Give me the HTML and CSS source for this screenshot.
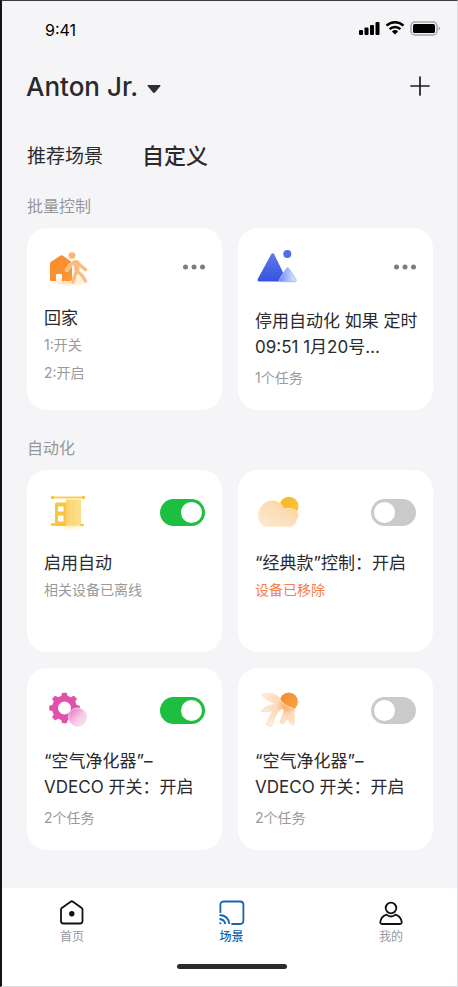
FILE: index.html
```html
<!DOCTYPE html>
<html lang="zh-CN">
<head>
<meta charset="utf-8">
<meta name="viewport" content="width=device-width, initial-scale=1">
<title>场景</title>
<link rel="stylesheet" href="styles.css">
</head>
<body>
<div class="screen">
  <div class="status">
    <span class="status-time">9:41</span>
    <svg class="status-icons" width="84" height="16" viewBox="0 0 84 16" aria-hidden="true">
      <rect x="1" y="10" width="4" height="5" rx="1"/>
      <rect x="6.500" y="7.500" width="4" height="7.500" rx="1"/>
      <rect x="12" y="5" width="4" height="10" rx="1"/>
      <rect x="17.500" y="2" width="4" height="13" rx="1"/>
      <g fill="none" stroke="#000" stroke-width="2.500">
        <path d="M28.500 5.700a12.200 12.200 0 0 1 17 0"/>
        <path d="M31.600 9.100a7.800 7.800 0 0 1 10.800 0"/>
      </g>
      <path d="M33.900 11.400a4.600 4.600 0 0 1 6.200 0L37 14.600z"/>
      <rect x="53" y="2" width="26" height="13" rx="4" fill="none" stroke="#a4a4a6" stroke-width="1.500"/>
      <rect x="55" y="4" width="22" height="9" rx="1.500"/>
      <path d="M80.500 6.500c2 .8 2 3.200 0 4z" fill="#a4a4a6"/>
    </svg>
  </div>

  <header class="header">
    <button class="home-picker" type="button">
      <span>Anton Jr.</span>
      <svg width="14" height="10" viewBox="0 0 14 10" aria-hidden="true"><path d="M1.200 1h11.600q1.400 0 .4 1.300L8.200 8.300q-1.200 1.300-2.400 0L.8 2.300Q-.2 1 1.200 1z" fill="#2e2e33"/></svg>
    </button>
    <button class="icon-button" type="button" aria-label="添加">
      <svg width="20" height="20" viewBox="0 0 20 20" aria-hidden="true"><path d="M10 1v18M1 10h18" stroke="#1c1c1e" stroke-width="1.700" fill="none" stroke-linecap="round"/></svg>
    </button>
  </header>

  <nav class="tabs">
    <a class="tab" href="#recommended">推荐场景</a>
    <a class="tab tab-active" href="#custom">自定义</a>
  </nav>

  <main class="content" id="custom">
    <section class="group">
      <h2 class="group-title">批量控制</h2>
      <div class="grid">
        <article class="card card-list">
          <div class="card-head">
            <svg class="card-icon" width="48" height="48" viewBox="0 0 48 48" aria-hidden="true">
              <defs>
                <linearGradient id="house" x1="0" y1="0" x2="1" y2="1"><stop offset="0" stop-color="#f98a2c"/><stop offset="1" stop-color="#fb9834"/></linearGradient>
                <radialGradient id="houseGlow"><stop offset="0" stop-color="#fdd9ae"/><stop offset="1" stop-color="#fdd9ae" stop-opacity="0"/></radialGradient>
              </defs>
              <ellipse cx="25" cy="35" rx="20" ry="6" fill="url(#houseGlow)"/>
              <path d="M6 17.500q0-1 .8-1.500L16.500 9.600q1.200-.8 2.400 0l8.300 6.200q.8.600.8 1.600V34q0 1-1 1h-9v-6q0-1-1-1h-4q-1 0-1 1v6H7q-1 0-1-1z" fill="url(#house)"/>
              <g stroke-linecap="round" stroke-linejoin="round" fill="none">
                <g stroke="#fde0c0" stroke-width="4"><path d="M30.500 16l-4.500 3.500-3 4.500M33 16l4 4 4.500 3.500M31 17l1.500 8-3.500 11M33.500 17l-.5 8 5 4.500 3.500 5.500"/></g>
                <g stroke="#f9bb83" stroke-width="3"><path d="M30.500 16l-4.500 3.500-3 4.500M33 16l4 4 4.500 3.500M31 17l1.500 8-3.500 11M33.500 17l-.5 8 5 4.500 3.500 5.500"/></g>
              </g>
              <path d="M29.500 14.500h5l1 10h-4.500z" fill="#f9bb83"/>
              <circle cx="28" cy="9.500" r="3.500" fill="#f9b475" stroke="#fde0c2" stroke-width=".6"/>
            </svg>
            <button class="more" type="button" aria-label="更多">
              <svg width="24" height="6" viewBox="0 0 24 6" fill="#7d7d80" aria-hidden="true"><circle cx="4.500" cy="3" r="2.500"/><circle cx="13" cy="3" r="2.500"/><circle cx="21.500" cy="3" r="2.500"/></svg>
            </button>
          </div>
          <h3 class="card-title">回家</h3>
          <p class="card-note">1:开关</p>
          <p class="card-note">2:开启</p>
        </article>

        <article class="card card-long">
          <div class="card-head">
            <svg class="card-icon" width="48" height="48" viewBox="0 0 48 48" aria-hidden="true">
              <defs>
                <linearGradient id="peak" x1="0" y1="0" x2="0" y2="1"><stop offset="0" stop-color="#6179ea"/><stop offset="1" stop-color="#3453e0"/></linearGradient>
                <linearGradient id="smallPeak" x1="0" y1="0" x2="1" y2="0"><stop offset="0" stop-color="#6d86ee"/><stop offset="1" stop-color="#e4eaff"/></linearGradient>
              </defs>
              <path d="M16.200 8.200q1.500-2 3 0L31 32.500q1.200 3-1.500 3h-25q-3 0-1.500-3z" fill="url(#peak)"/>
              <circle cx="32.300" cy="8" r="4" fill="#526dea"/>
              <path d="M31.400 22.500q1.300-1.800 2.600 0l7 11q1 2.200-1.200 2.200H25.600q-2.200 0-1.200-2.200z" fill="url(#smallPeak)" stroke="#aab9f7" stroke-width="1"/>
            </svg>
            <button class="more" type="button" aria-label="更多">
              <svg width="24" height="6" viewBox="0 0 24 6" fill="#7d7d80" aria-hidden="true"><circle cx="4.500" cy="3" r="2.500"/><circle cx="13" cy="3" r="2.500"/><circle cx="21.500" cy="3" r="2.500"/></svg>
            </button>
          </div>
          <h3 class="card-title">停用自动化 如果 定时 09:51 1月20号…</h3>
          <p class="card-note">1个任务</p>
        </article>
      </div>
    </section>

    <section class="group">
      <h2 class="group-title">自动化</h2>
      <div class="grid">
        <article class="card">
          <div class="card-head">
            <svg class="card-icon" width="48" height="48" viewBox="0 0 48 48" aria-hidden="true">
              <defs>
                <radialGradient id="curtainGlow"><stop offset="0" stop-color="#fde3a0"/><stop offset="1" stop-color="#fff" stop-opacity="0"/></radialGradient>
                <linearGradient id="curtain" x1="0" y1="0" x2="1" y2="0"><stop offset="0" stop-color="#fbd368"/><stop offset="1" stop-color="#fadf8a"/></linearGradient>
              </defs>
              <ellipse cx="27" cy="37" rx="18" ry="8" fill="url(#curtainGlow)"/>
              <path d="M8 9.500h32" stroke="#f8cf55" stroke-width="2"/>
              <circle cx="8.500" cy="9.500" r="1.700" fill="#f6c43b"/><circle cx="39.500" cy="9.500" r="1.700" fill="#f6c43b"/>
              <path d="M8 36.500h6" stroke="#f6bf30" stroke-width="2.400" stroke-linecap="round"/>
              <path fill-rule="evenodd" d="M11 16q0-1.500 1.500-1.500H22V38H11zM14 18.500v5h5.500v-5zM14 27.500v6h5.500v-6z" fill="#f9c540"/>
              <path d="M22 11.500h15v26H22z" fill="url(#curtain)"/>
              <path d="M27 11.500v26M32 11.500v26" stroke="#fbe08c" stroke-width="1"/>
              <path d="M37 37h2" stroke="#f6c43b" stroke-width="2" stroke-linecap="round"/>
            </svg>
            <input class="switch" type="checkbox" role="switch" aria-label="启用自动" checked>
          </div>
          <h3 class="card-title">启用自动</h3>
          <p class="card-note">相关设备已离线</p>
        </article>

        <article class="card">
          <div class="card-head">
            <svg class="card-icon" width="48" height="48" viewBox="0 0 48 48" aria-hidden="true">
              <defs>
                <linearGradient id="sun" x1="0" y1="0" x2="1" y2="1"><stop offset="0" stop-color="#f7b520"/><stop offset="1" stop-color="#fcc84e"/></linearGradient>
                <linearGradient id="cloud" x1="1" y1="0" x2="0" y2="1"><stop offset="0" stop-color="#fbcf78"/><stop offset=".4" stop-color="#fbdcb4"/><stop offset="1" stop-color="#fde9d2"/></linearGradient>
              </defs>
              <circle cx="34" cy="18.300" r="9.500" fill="url(#sun)"/>
              <path d="M12.500 38.500C7 38.500 3.500 34 3.500 27.500c0-5 1.500-8.500 5-11.500 2.500-2.500 5.500-3.500 9-3.500 6 0 9.800 3.500 11 9 1.500-.8 3-1 5-1 6 0 9.800 3 9.800 7.500 0 2-.8 3-2 4 0 4-3.300 6.500-7.800 6.500z" fill="url(#cloud)" stroke="#fdebcf" stroke-width=".8"/>
            </svg>
            <input class="switch" type="checkbox" role="switch" aria-label="“经典款”控制：开启">
          </div>
          <h3 class="card-title">“经典款”控制：开启</h3>
          <p class="card-note card-alert">设备已移除</p>
        </article>

        <article class="card card-long">
          <div class="card-head">
            <svg class="card-icon" width="48" height="48" viewBox="0 0 48 48" aria-hidden="true">
              <defs>
                <linearGradient id="bubble" x1="0" y1="0" x2="1" y2="1"><stop offset="0" stop-color="#e668b8"/><stop offset=".55" stop-color="#f6c8e5"/><stop offset="1" stop-color="#fbe9f5"/></linearGradient>
              </defs>
              <circle cx="20.500" cy="22" r="9.500" fill="none" stroke="#e150ab" stroke-width="6"/>
              <g fill="#e150ab">
                <path id="tooth" d="M17.200 11l.7-3.500q.2-.8 1-.8h3.200q.8 0 1 .8l.7 3.500z"/>
                <use href="#tooth" transform="rotate(45 20.500 22)"/>
                <use href="#tooth" transform="rotate(90 20.500 22)"/>
                <use href="#tooth" transform="rotate(135 20.500 22)"/>
                <use href="#tooth" transform="rotate(180 20.500 22)"/>
                <use href="#tooth" transform="rotate(225 20.500 22)"/>
                <use href="#tooth" transform="rotate(270 20.500 22)"/>
                <use href="#tooth" transform="rotate(315 20.500 22)"/>
              </g>
              <circle cx="33.500" cy="31" r="9" fill="url(#bubble)" stroke="#f7d3ea" stroke-width="1"/>
            </svg>
            <input class="switch" type="checkbox" role="switch" aria-label="“空气净化器”– VDECO 开关：开启" checked>
          </div>
          <h3 class="card-title">“空气净化器”– VDECO 开关：开启</h3>
          <p class="card-note">2个任务</p>
        </article>

        <article class="card card-long">
          <div class="card-head">
            <svg class="card-icon" width="48" height="48" viewBox="0 0 48 48" aria-hidden="true">
              <defs>
                <linearGradient id="core" x1="0" y1="0" x2="1" y2="1"><stop offset="0" stop-color="#f58a2c"/><stop offset="1" stop-color="#fba649"/></linearGradient>
                <radialGradient id="petal" gradientUnits="userSpaceOnUse" cx="31" cy="20" r="24"><stop offset="0" stop-color="#f9a95c"/><stop offset=".4" stop-color="#fcd9ba"/><stop offset="1" stop-color="#fdebd8"/></radialGradient>
              </defs>
              <circle cx="33.800" cy="15.800" r="9.200" fill="url(#core)"/>
              <g fill="url(#petal)" stroke="#fbd3ae" stroke-width=".5" stroke-linejoin="round">
                <path d="M26 19C20 18 13 15.500 7.500 10q-.8-1.500 1-2C15 7 21 7.500 25 12z"/>
                <path d="M27 19c-6-1.500-10-.5-14 1-3.500 1.300-5.500 3-7 4.500q-.5 1.200 1 1.200c6 0 12 .3 18-3.700z"/>
                <path d="M26 20c-5 2-9 5-11 9-1.500 3.500-3 7-4 9.500q1.500 2.500 6 1.500c1.500-4 2.500-8 4.500-11.500 1.500-2.500 4-5 6.500-6.500z"/>
                <path d="M28.500 24c0 5-3 8-3.500 12.500q1 1.800 3.500 1l4-4.500c.5-3 .5-6 0-9z"/>
                <path d="M31 24c0 5 2 11 5.500 14.500q2 1.200 2.500-.5c1-5 .8-10-1-13.500z"/>
                <path d="M24.500 12c2 4 5 6.500 14.500 10.500 1 1 1 3.500 0 5-6-1-11-3-14.500-7-1.500-3-1.500-6 0-8.500z" stroke="none"/>
              </g>
              <path d="M24.500 12c2 5 6 8 13.500 10.500" fill="none" stroke="#fde2c6" stroke-width=".8"/>
            </svg>
            <input class="switch" type="checkbox" role="switch" aria-label="“空气净化器”– VDECO 开关：开启">
          </div>
          <h3 class="card-title">“空气净化器”– VDECO 开关：开启</h3>
          <p class="card-note">2个任务</p>
        </article>
      </div>
    </section>
  </main>

  <footer class="footer">
    <nav class="tabbar">
      <a class="tabbar-item" href="#home">
        <svg width="28" height="28" viewBox="0 0 28 28" aria-hidden="true"><path d="M3 10.500q0-1 .8-1.600L12.600 2.700q1.200-.9 2.400 0l8.700 6.200q.8.600.8 1.600V22q0 2.500-2.500 2.500H5.500Q3 24.500 3 22z" fill="none" stroke="#111" stroke-width="1.800"/><circle cx="13.800" cy="14.700" r="2.700" fill="#111"/></svg>
        <span>首页</span>
      </a>
      <a class="tabbar-item tabbar-active" href="#scenes">
        <svg width="28" height="28" viewBox="0 0 28 28" fill="none" stroke="#1464b4" stroke-width="1.800" aria-hidden="true"><path d="M2.400 14V6q0-3.500 3.500-3.500h16q3.500 0 3.500 3.500v15.500q0 3.500-3.500 3.500h-8.500"/><path d="M1.500 16q9 .5 9.800 9M1.500 20q5 .6 5.800 5"/><circle cx="2.300" cy="24.200" r="1" fill="#1464b4" stroke="none"/></svg>
        <span>场景</span>
      </a>
      <a class="tabbar-item" href="#me">
        <svg width="28" height="28" viewBox="0 0 28 28" fill="none" stroke="#111" stroke-width="1.800" stroke-linejoin="round" aria-hidden="true"><circle cx="14" cy="9" r="5.300"/><path d="M9.500 15.700Q11.500 17.500 14 17.500t4.500-1.800q5.500 2 6.200 7.300.2 2-1.700 2H5q-1.900 0-1.700-2 .7-5.300 6.200-7.300z"/></svg>
        <span>我的</span>
      </a>
    </nav>
    <div class="home-bar"></div>
  </footer>
</div>
</body>
</html>
```

FILE: styles.css
```css
* {
  box-sizing: border-box;
}

body {
  margin: 0;
  background: #f5f5f8;
  color: #2a2a2c;
  font-family: "Liberation Sans", "Noto Sans CJK SC", sans-serif;
}

h2,
h3,
p {
  margin: 0;
  font-weight: 400;
}

a {
  color: inherit;
  text-decoration: none;
}

button {
  padding: 0;
  border: 0;
  background: none;
  color: inherit;
  font: inherit;
}

svg {
  display: block;
  flex: none;
}

.screen {
  display: flex;
  flex-direction: column;
  min-height: 100vh;
  border: 1px solid #dcdce0;
  border-top-color: #3c3a42;
  border-left: 2px solid #141416;
}

/* Status bar */
.status {
  display: flex;
  align-items: center;
  justify-content: space-between;
  height: 56px;
  padding: 0 15px 0 43px;
}

.status-time {
  padding-top: 2px;
  color: #000;
  font-family: Inter, sans-serif;
  font-size: 16px;
}

.status-icons {
  margin-bottom: 2px;
}

/* Header */
.header {
  display: flex;
  align-items: center;
  justify-content: space-between;
  height: 58px;
  padding: 0 27px 0 24px;
}

.home-picker {
  display: flex;
  align-items: center;
  gap: 9px;
  font-family: Inter, sans-serif;
  font-size: 26px;
  font-weight: 500;
}

.home-picker svg {
  margin-top: 5px;
}

/* Tabs */
.tabs {
  display: flex;
  align-items: center;
  gap: 39px;
  height: 80px;
  padding: 0 25px 2px;
}

.tab {
  font-size: 19px;
}

.tab-active {
  font-size: 22px;
  font-weight: 500;
}

/* Card groups */
.content {
  padding: 0 24px 36px 25px;
}

.group + .group {
  margin-top: 27px;
}

.group-title {
  margin-bottom: 9px;
  color: #97979a;
  font-size: 16px;
  line-height: 24px;
}

.grid {
  display: grid;
  grid-template-columns: repeat(2, minmax(0, 1fr));
  gap: 16px;
}

.card {
  min-height: 182px;
  padding: 18px 17px 10px;
  border-radius: 20px;
  background: #fff;
}

.card-head {
  display: flex;
  align-items: center;
  justify-content: space-between;
  height: 48px;
  margin-bottom: 14px;
}

.card-list .card-head {
  margin-bottom: 11px;
}

.more {
  align-self: flex-start;
  height: 42px;
}

.card-title {
  margin-right: -4px;
  font-family: Inter, "Noto Sans CJK SC", sans-serif;
  font-size: 17px;
  line-height: 26px;
}

.card-long .card-title {
  padding-bottom: 4px;
}

.card-note {
  color: #9a9a9d;
  font-family: Inter, "Noto Sans CJK SC", sans-serif;
  font-size: 14px;
  line-height: 28px;
}

.card-alert {
  color: #f5804a;
}

.switch {
  appearance: none;
  flex: none;
  display: flex;
  align-items: center;
  width: 45px;
  height: 27px;
  margin: 0;
  padding: 0 3px;
  border-radius: 14px;
  background: #cacaca;
}

.switch::before {
  content: "";
  width: 21px;
  height: 21px;
  border-radius: 50%;
  background: #fff;
}

.switch:checked {
  justify-content: flex-end;
  background: #1cbf40;
}

/* Bottom bar */
.footer {
  margin-top: auto;
  padding: 11px 36px 17px 40px;
  background: #fff;
}

.tabbar {
  display: flex;
  justify-content: space-between;
}

.tabbar-item {
  display: flex;
  flex-direction: column;
  align-items: center;
  width: 60px;
  color: #97979a;
  font-size: 12px;
  line-height: 20px;
}

.tabbar-active {
  color: #1464b4;
  font-weight: 500;
}

.home-bar {
  width: 110px;
  height: 5px;
  margin: 17px auto 0;
  border-radius: 3px;
  background: #2c2c2e;
}
```
